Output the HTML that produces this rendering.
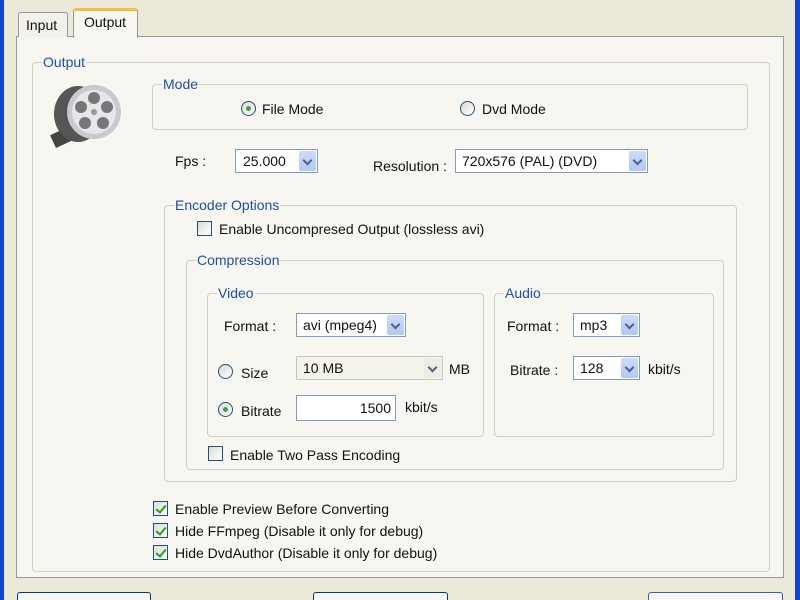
<!DOCTYPE html>
<html><head><style>
html{overflow:hidden;width:800px;height:600px}
body{margin:0;width:800px;height:600px;overflow:hidden;background:#ECE9D8;font-family:"Liberation Sans",sans-serif;font-size:14px;color:#111;position:relative}
div,span{position:absolute;box-sizing:border-box}
.t{white-space:nowrap;line-height:16px}
.g{border:1px solid #D0D0BF;border-radius:4px}
.gl{color:#1C4FA8;background:#F7F6F1;padding:0 1px;white-space:nowrap;line-height:16px}
.cb{border:1px solid #7F9DB9;background:#fff}
.arr{top:1px;right:1px;bottom:1px;width:17px;background:linear-gradient(#CEDBFB,#B3C7F7);border-radius:2px}
.arr:after{content:"";position:absolute;left:5px;top:6px;width:5px;height:5px;border-right:2px solid #4D6185;border-bottom:2px solid #4D6185;transform:rotate(45deg)}
.rd{width:15px;height:15px;border:1px solid #1C5180;border-radius:50%;background:linear-gradient(135deg,#DCDCD3,#fff)}
.rd.on:after{content:"";position:absolute;left:4px;top:4px;width:5px;height:5px;border-radius:50%;background:#3CA03C}
.ck{width:15px;height:15px;border:1px solid #1C5180;background:linear-gradient(135deg,#DCDCD3,#fff)}
.ck.on:after{content:"";position:absolute;left:4px;top:1px;width:4px;height:8px;border-right:2px solid #21A121;border-bottom:2px solid #21A121;transform:rotate(40deg)}
.btn{top:592px;height:8px;border:1px solid #003C74;border-bottom:none;border-radius:3px 3px 0 0;background:#F6F6F2}
</style></head><body>
<div style="left:0;top:0;width:4px;height:600px;background:#0A47D4"></div>
<div style="left:795px;top:0;width:5px;height:600px;background:#0A47D4"></div>
<div style="left:16px;top:36px;width:768px;height:542px;background:#F7F6F1;border:1px solid #919B9C"></div>
<div style="left:18px;top:12px;width:50px;height:25px;border:1px solid #919B9C;border-bottom:none;background:#F2F1EA;border-radius:3px 3px 0 0"></div>
<span class="t" style="left:26px;top:17px">Input</span>
<div style="left:73px;top:8px;width:65px;height:30px;border:1px solid #919B9C;border-bottom:none;border-top:3px solid #F5BE40;background:#F7F6F1;border-radius:3px 3px 0 0"></div>
<span class="t" style="left:84px;top:14px">Output</span>

<div class="g" style="left:32px;top:62px;width:738px;height:510px"></div>
<span class="gl" style="left:42px;top:54px">Output</span>
<svg style="position:absolute;left:44px;top:78px" width="84" height="78"><rect x="8" y="52" width="22" height="14" fill="#444" transform="rotate(-25 19 59)"/><ellipse cx="34" cy="36" rx="24" ry="28" fill="#555"/><circle cx="50" cy="34" r="27" fill="#C9CACD"/><circle cx="50" cy="34" r="22" fill="#E6E7EA"/><g fill="#777"><circle cx="50" cy="20" r="6"/><circle cx="63" cy="29" r="6"/><circle cx="59" cy="45" r="6"/><circle cx="41" cy="45" r="6"/><circle cx="37" cy="29" r="6"/></g><circle cx="50" cy="34" r="3" fill="#999"/></svg>

<div class="g" style="left:152px;top:84px;width:596px;height:46px;background:#F7F6F1"></div>
<span class="gl" style="left:162px;top:76px">Mode</span>
<div class="rd on" style="left:241px;top:101px"></div><span class="t" style="left:262px;top:101px">File Mode</span>
<div class="rd" style="left:460px;top:101px"></div><span class="t" style="left:482px;top:101px">Dvd Mode</span>

<span class="t" style="left:175px;top:153px">Fps :</span>
<div class="cb" style="left:235px;top:149px;width:83px;height:24px"><span class="t" style="left:7px;top:3px">25.000</span><div class="arr"></div></div>
<span class="t" style="left:373px;top:158px">Resolution :</span>
<div class="cb" style="left:455px;top:149px;width:193px;height:24px"><span class="t" style="left:6px;top:3px">720x576 (PAL) (DVD)</span><div class="arr"></div></div>

<div class="g" style="left:164px;top:205px;width:573px;height:277px"></div>
<span class="gl" style="left:174px;top:197px">Encoder Options</span>
<div class="ck" style="left:197px;top:221px"></div><span class="t" style="left:219px;top:221px">Enable Uncompresed Output (lossless avi)</span>

<div class="g" style="left:186px;top:260px;width:538px;height:210px"></div>
<span class="gl" style="left:196px;top:252px">Compression</span>

<div class="g" style="left:207px;top:293px;width:277px;height:144px"></div>
<span class="gl" style="left:217px;top:285px">Video</span>
<span class="t" style="left:224px;top:318px">Format :</span>
<div class="cb" style="left:296px;top:313px;width:110px;height:24px"><span class="t" style="left:6px;top:3px">avi (mpeg4)</span><div class="arr"></div></div>
<div class="rd" style="left:218px;top:364px"></div><span class="t" style="left:241px;top:365px">Size</span>
<div style="left:296px;top:356px;width:147px;height:24px;border:1px solid #C9C7BA;background:#F5F4EA"><span class="t" style="left:6px;top:3px">10 MB</span><div class="arr" style="background:#EEEDE4"></div></div>
<span class="t" style="left:449px;top:361px">MB</span>
<div class="rd on" style="left:218px;top:402px"></div><span class="t" style="left:241px;top:403px">Bitrate</span>
<div class="cb" style="left:296px;top:395px;width:100px;height:26px"><span class="t" style="right:4px;top:4px">1500</span></div>
<span class="t" style="left:405px;top:399px">kbit/s</span>
<div class="ck" style="left:208px;top:446px"></div><span class="t" style="left:230px;top:447px">Enable Two Pass Encoding</span>

<div class="g" style="left:494px;top:293px;width:220px;height:144px"></div>
<span class="gl" style="left:504px;top:285px">Audio</span>
<span class="t" style="left:507px;top:318px">Format :</span>
<div class="cb" style="left:573px;top:313px;width:67px;height:24px"><span class="t" style="left:6px;top:3px">mp3</span><div class="arr"></div></div>
<span class="t" style="left:510px;top:362px">Bitrate :</span>
<div class="cb" style="left:573px;top:356px;width:67px;height:24px"><span class="t" style="left:6px;top:3px">128</span><div class="arr"></div></div>
<span class="t" style="left:648px;top:361px">kbit/s</span>

<div class="ck on" style="left:153px;top:501px"></div><span class="t" style="left:175px;top:501px">Enable Preview Before Converting</span>
<div class="ck on" style="left:153px;top:523px"></div><span class="t" style="left:175px;top:523px">Hide FFmpeg (Disable it only for debug)</span>
<div class="ck on" style="left:153px;top:545px"></div><span class="t" style="left:175px;top:545px">Hide DvdAuthor (Disable it only for debug)</span>

<div class="btn" style="left:17px;width:134px"></div>
<div class="btn" style="left:313px;width:135px"></div>
<div class="btn" style="left:648px;width:135px;border-color:#3C5FB8"></div>
</body></html>
